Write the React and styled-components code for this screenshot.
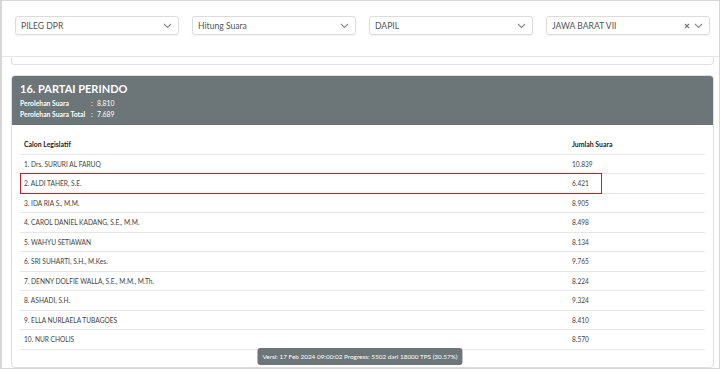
import React from "react";
import styled, { createGlobalStyle } from "styled-components";

const GlobalStyle = createGlobalStyle`
  html, body { margin: 0; padding: 0; background: #fff; }
  body { font-family: Lato, "Open Sans", sans-serif; color: #444; }
  * { box-sizing: border-box; }
`;

const filters = [
  { label: "PILEG DPR" },
  { label: "Hitung Suara" },
  { label: "DAPIL" },
  { label: "JAWA BARAT VII", clearable: true },
];

const rows = [
  ["1. Drs. SURURI AL FARUQ", "10.839"],
  ["2. ALDI TAHER, S.E.", "6.421", true],
  ["3. IDA RIA S., M.M.", "8.905"],
  ["4. CAROL DANIEL KADANG, S.E., M.M.", "8.498"],
  ["5. WAHYU SETIAWAN", "8.134"],
  ["6. SRI SUHARTI, S.H., M.Kes.", "9.765"],
  ["7. DENNY DOLFIE WALLA, S.E., M.M., M.Th.", "8.224"],
  ["8. ASHADI, S.H.", "9.324"],
  ["9. ELLA NURLAELA TUBAGOES", "8.410"],
  ["10. NUR CHOLIS", "8.570"],
];

const Chevron = () => (
  <svg width="9" height="6" viewBox="0 0 9 6">
    <polyline points="1,1 4.5,4.5 8,1" fill="none" stroke="#8a8a8a" strokeWidth="1.1" />
  </svg>
);

const Clear = () => (
  <svg width="6" height="6" viewBox="0 0 6 6">
    <path d="M1 1L5 5M5 1L1 5" stroke="#777" strokeWidth="1.1" />
  </svg>
);

const App = () => {
  return (
    <Frame>
      <GlobalStyle />
      <FilterBar>
        {filters.map((f) => (
          <Select key={f.label}>
            <span>{f.label}</span>
            <Icons>
              {f.clearable && <Clear />}
              <Chevron />
            </Icons>
          </Select>
        ))}
      </FilterBar>
      <Content>
        <PrevCard />
        <PartyCard>
          <PartyHead>
            <h2>16. PARTAI PERINDO</h2>
            <Stats>
              <b>Perolehan Suara</b>
              <span>:</span>
              <span>8.810</span>
              <b>Perolehan Suara Total</b>
              <span>:</span>
              <span>7.689</span>
            </Stats>
          </PartyHead>
          <PartyBody>
            <Table>
              <thead>
                <tr>
                  <th>Calon Legislatif</th>
                  <th>Jumlah Suara</th>
                </tr>
              </thead>
              <tbody>
                {rows.map(([name, votes, marked]) => (
                  <tr key={name}>
                    <td>
                      {marked && <Mark />}
                      {name}
                    </td>
                    <td>{votes}</td>
                  </tr>
                ))}
              </tbody>
            </Table>
          </PartyBody>
        </PartyCard>
      </Content>
      <Toast>Versi: 17 Feb 2024 09:00:02 Progress: 5502 dari 18000 TPS (30.57%)</Toast>
    </Frame>
  );
};

export default App;

const Frame = styled.div`
  width: 720px;
  height: 369px;
  border: 1px solid #d6d6d6;
  border-left-width: 2px;
  overflow: hidden;
  position: relative;
  background: #fff;
`;

const FilterBar = styled.div`
  height: 56px;
  border-bottom: 1px solid #e4e4e4;
  display: grid;
  grid-template-columns: repeat(4, 164px);
  column-gap: 13px;
  padding: 15px 0 0 13px;
`;

const Select = styled.div`
  height: 19px;
  border: 1px solid #dcdcdc;
  border-radius: 3px;
  box-shadow: 0 1px 2px rgba(0, 0, 0, 0.06);
  display: flex;
  align-items: center;
  justify-content: space-between;
  padding: 0 6px 0 5px;
  font-size: 8.6px;
  color: #555;
`;

const Icons = styled.div`
  display: flex;
  align-items: center;
  gap: 4px;
  svg { display: block; }
`;

const Content = styled.div`
  padding: 0 5px 0 9px;
`;

const PrevCard = styled.div`
  height: 8px;
  border: 1px solid #e0e0e0;
  border-top: none;
  border-radius: 0 0 4px 4px;
  margin-bottom: 10px;
`;

const PartyCard = styled.div`
  border: 1px solid #dedede;
  border-radius: 4px;
  overflow: hidden;
`;

const PartyHead = styled.div`
  background: #6c7678;
  color: #fff;
  height: 49px;
  padding: 6px 8px 0;
  h2 {
    margin: 0 0 2px;
    font-size: 11px;
    font-weight: 700;
    line-height: 14px;
  }
`;

const Stats = styled.div`
  display: grid;
  grid-template-columns: 71px 6px auto;
  justify-content: start;
  font-size: 6.8px;
  line-height: 11px;
  b { font-weight: 700; }
`;

const PartyBody = styled.div`
  padding: 10px 8px 17px;
`;

const Table = styled.table`
  width: 100%;
  border-collapse: collapse;
  font-size: 6.6px;
  th, td {
    text-align: left;
    padding: 0 4px;
    height: 19.5px;
    border-bottom: 1px solid #e6e6e6;
  }
  th {
    font-weight: 700;
    color: #222;
    height: 19px;
    font-size: 6.9px;
  }
  td { color: #444; }
  th:first-child, td:first-child {
    width: 548px;
    position: relative;
  }
`;

const Mark = styled.span`
  position: absolute;
  left: 0;
  top: -1px;
  height: 21px;
  width: 582px;
  border: 1px solid #d0192f;
  pointer-events: none;
`;

const Toast = styled.div`
  position: fixed;
  bottom: 4px;
  left: 50%;
  transform: translateX(-50%);
  background: #6c7678;
  color: #fff;
  border-radius: 3px;
  padding: 0 5px;
  height: 17px;
  display: flex;
  align-items: center;
  white-space: nowrap;
  font-size: 6.4px;
`;
